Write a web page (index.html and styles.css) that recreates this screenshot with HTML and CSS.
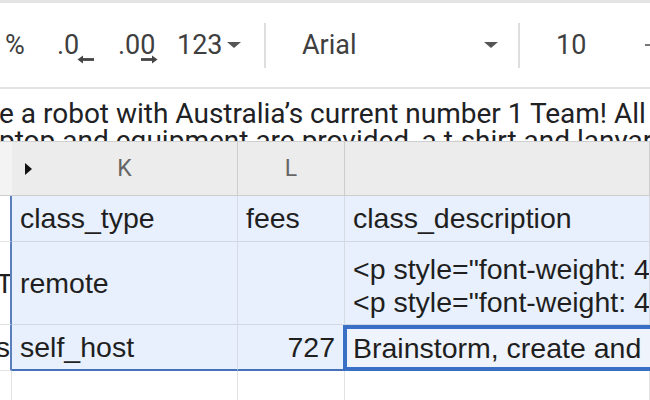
FILE: index.html
```html
<!DOCTYPE html>
<html>

<head>
  <meta charset="UTF-8">
  <title>Sheet</title>
  <link rel="stylesheet" href="styles.css">
</head>

<body>
  <div id="app">
    <div class="top-strip"></div>

    <!-- toolbar -->
    <div class="toolbar">
      <div class="tb-item tb-pct">%</div>
      <div class="tb-item tb-dec1">
        <span>.0</span>
        <svg class="tb-arrow" width="18" height="9" viewBox="0 0 18 9">
          <path d="M5 4.5H17" stroke="#444" stroke-width="2.8" />
          <path d="M0.5 4.5L6 0.5V8.5Z" fill="#444" />
        </svg>
      </div>
      <div class="tb-item tb-dec2">
        <span>.00</span>
        <svg class="tb-arrow arrow-right" width="18" height="9" viewBox="0 0 18 9">
          <path d="M1 4.5H13" stroke="#444" stroke-width="2.8" />
          <path d="M17.5 4.5L12 0.5V8.5Z" fill="#444" />
        </svg>
      </div>
      <div class="tb-item tb-fmt">
        <span>123</span>
        <span class="caret"></span>
      </div>
      <div class="tb-sep"></div>
      <div class="tb-item tb-font">
        <span>Arial</span>
        <span class="caret"></span>
      </div>
      <div class="tb-sep"></div>
      <div class="tb-item tb-size">10</div>
      <div class="tb-item tb-minus"></div>
    </div>

    <!-- formula bar -->
    <div class="formula-bar">
      <p>e a robot with Australia’s current number 1 Team! All</p>
      <p>ptop and equipment are provided, a t-shirt and lanyard</p>
    </div>

    <!-- grid -->
    <div class="grid">
      <div class="cell hd hd-j"></div>
      <div class="cell hd hd-k"><span class="hd-mark"></span>K</div>
      <div class="cell hd">L</div>
      <div class="cell hd"></div>

      <div class="cell col-j sel-edge"></div>
      <div class="cell sel">class_type</div>
      <div class="cell sel">fees</div>
      <div class="cell sel">class_description</div>

      <div class="cell col-j sel-edge"><span class="clip-left">To</span></div>
      <div class="cell sel">remote</div>
      <div class="cell sel"></div>
      <div class="cell sel wrap">
        <span>&lt;p style="font-weight: 400;"&gt;</span>
        <span>&lt;p style="font-weight: 400;"&gt;</span>
      </div>

      <div class="cell col-j sel-edge end"><span>skills</span></div>
      <div class="cell sel sel-bottom">self_host</div>
      <div class="cell sel sel-bottom num">727</div>
      <div class="cell sel active">Brainstorm, create and program</div>

      <div class="cell col-j"></div>
      <div class="cell"></div>
      <div class="cell"></div>
      <div class="cell"></div>
    </div>
  </div>
</body>

</html>
```

FILE: styles.css
```css
body {
  margin: 0;
  padding: 0;
  background-color: white;
  font-family: "Liberation Sans", Arial, sans-serif;
  color: #1f1f1f;
}

#app {
  width: 650px;
  height: 400px;
  overflow: hidden;
}

.top-strip {
  height: 3px;
  background-color: #e4e4e4;
}

/** 工具栏 */
.toolbar {
  display: flex;
  flex-direction: row;
  align-items: center;
  height: 84px;
  padding-left: 5px;
  border-bottom: 2px solid #e3e3e3;
  font-family: Roboto, "Liberation Sans", sans-serif;
  font-size: 27px;
  color: #3f3f3f;
  white-space: nowrap;
}

.tb-item {
  display: flex;
  flex-direction: row;
  align-items: center;
  flex-shrink: 0;
}

.tb-pct {
  width: 52px;
}

.tb-dec1 {
  width: 61px;
}

.tb-dec2 {
  width: 59px;
}

.tb-arrow {
  flex-shrink: 0;
  margin-top: 29px;
  margin-left: -2px;
}

.tb-arrow.arrow-right {
  margin-left: -15px;
}

.tb-fmt {
  width: 87px;
}

.caret {
  display: inline-block;
  width: 0;
  height: 0;
  border-left: 7px solid transparent;
  border-right: 7px solid transparent;
  border-top: 6px solid #555;
  margin-left: 4px;
}

.tb-sep {
  flex-shrink: 0;
  width: 2px;
  height: 45px;
  background-color: #dedede;
}

.tb-font {
  width: 216px;
  padding-left: 36px;
}

.tb-font .caret {
  margin-left: auto;
  margin-right: 20px;
}

.tb-size {
  width: 89px;
  padding-left: 36px;
}

.tb-minus {
  width: 6px;
  height: 2px;
  background-color: #777;
}

/** 公式栏 */
.formula-bar {
  height: 53px;
  padding-top: 11px;
  box-sizing: border-box;
  overflow: hidden;
  font-family: Roboto, "Liberation Sans", sans-serif;
  font-size: 28px;
  line-height: 27px;
  color: #202124;
  white-space: nowrap;
  border-bottom: 1px solid #cfcfcf;
}

.formula-bar p {
  margin: 0 0 0 -1px;
}

/** 表格 */
.grid {
  display: grid;
  grid-template-columns: 12px 226px 107px 305px;
  grid-template-rows: 54px 46px 83px 46px 46px;
  font-size: 28.5px;
}

.cell {
  box-sizing: border-box;
  display: flex;
  align-items: center;
  padding: 0 8px;
  border-right: 1px solid #e2e2e2;
  border-bottom: 1px solid #e2e2e2;
  white-space: nowrap;
  overflow: hidden;
}

.hd {
  justify-content: center;
  background-color: #ececec;
  border-right-color: #cdcdcd;
  border-bottom: 1px solid #cdcdcd;
  font-family: Roboto, "Liberation Sans", sans-serif;
  font-size: 23px;
  color: #666;
}

.hd-j {
  background-color: #f3f3f3;
}

.hd-k {
  position: relative;
}

/* 隐藏列标记 */
.hd-mark {
  position: absolute;
  left: 13px;
  top: 21px;
  width: 0;
  height: 0;
  border-top: 6px solid transparent;
  border-bottom: 6px solid transparent;
  border-left: 7px solid #111;
}

.col-j {
  padding: 0;
}

.col-j.end {
  justify-content: flex-end;
}

.clip-left {
  margin-left: -4px;
}

.sel {
  background-color: #e8f0fd;
  border-right-color: #d6dbe3;
  border-bottom-color: #d0d8e4;
}

.sel-edge {
  border-right: 2px solid #5b7fba;
}

.sel-bottom {
  border-bottom: 2px solid #4571bb;
}

.num {
  justify-content: flex-end;
  padding-right: 9px;
}

.wrap {
  flex-direction: column;
  align-items: flex-start;
  justify-content: center;
  line-height: 33px;
  padding-top: 5px;
}

.active {
  background-color: #eef3fc;
  border: 4px solid #3a6fc6;
  border-right: none;
  margin-left: -2px;
  padding-left: 6px;
}
```
